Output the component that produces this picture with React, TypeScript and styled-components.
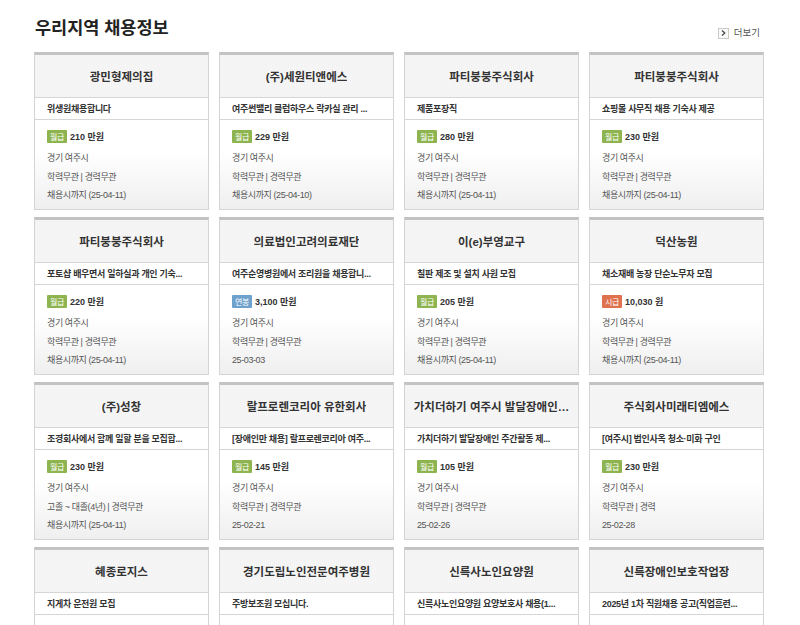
import * as React from 'react';
import styled, { createGlobalStyle } from 'styled-components';

const GlobalStyle = createGlobalStyle`
  html, body {
    margin: 0;
    padding: 0;
    background: #fff;
  }
  body {
    font-family: 'Liberation Sans', 'Noto Sans CJK KR', sans-serif;
    color: #333;
  }
`;

type PayKind = 'month' | 'year' | 'hour';

interface Job {
  company: string;
  title: string;
  kind: PayKind;
  pay: string;
  region: string;
  req: string;
  due: string;
}

const payLabel: Record<PayKind, string> = {
  month: '월급',
  year: '연봉',
  hour: '시급',
};

const payColor: Record<PayKind, string> = {
  month: '#8db44e',
  year: '#6ea2cd',
  hour: '#e0714f',
};

const jobs: Job[] = [
  { company: '광민형제의집', title: '위생원채용합니다', kind: 'month', pay: '210 만원', region: '경기 여주시', req: '학력무관 | 경력무관', due: '채용시까지 (25-04-11)' },
  { company: '(주)세원티앤에스', title: '여주썬밸리 클럽하우스 락카실 관리 ...', kind: 'month', pay: '229 만원', region: '경기 여주시', req: '학력무관 | 경력무관', due: '채용시까지 (25-04-10)' },
  { company: '파티붕붕주식회사', title: '제품포장직', kind: 'month', pay: '280 만원', region: '경기 여주시', req: '학력무관 | 경력무관', due: '채용시까지 (25-04-11)' },
  { company: '파티붕붕주식회사', title: '쇼핑몰 사무직 채용 기숙사 제공', kind: 'month', pay: '230 만원', region: '경기 여주시', req: '학력무관 | 경력무관', due: '채용시까지 (25-04-11)' },
  { company: '파티붕붕주식회사', title: '포토샵 배우면서 일하실과 개인 기숙...', kind: 'month', pay: '220 만원', region: '경기 여주시', req: '학력무관 | 경력무관', due: '채용시까지 (25-04-11)' },
  { company: '의료법인고려의료재단', title: '여주순영병원에서 조리원을 채용합니...', kind: 'year', pay: '3,100 만원', region: '경기 여주시', req: '학력무관 | 경력무관', due: '25-03-03' },
  { company: '이(e)부영교구', title: '칠판 제조 및 설치 사원 모집', kind: 'month', pay: '205 만원', region: '경기 여주시', req: '학력무관 | 경력무관', due: '채용시까지 (25-04-11)' },
  { company: '덕산농원', title: '채소재배 농장 단순노무자 모집', kind: 'hour', pay: '10,030 원', region: '경기 여주시', req: '학력무관 | 경력무관', due: '채용시까지 (25-04-11)' },
  { company: '(주)성창', title: '조경회사에서 함께 일할 분을 모집합...', kind: 'month', pay: '230 만원', region: '경기 여주시', req: '고졸 ~ 대졸(4년) | 경력무관', due: '채용시까지 (25-04-11)' },
  { company: '랄프로렌코리아 유한회사', title: '[장애인만 채용] 랄프로렌코리아 여주...', kind: 'month', pay: '145 만원', region: '경기 여주시', req: '학력무관 | 경력무관', due: '25-02-21' },
  { company: '가치더하기 여주시 발달장애인…', title: '가치더하기 발달장애인 주간활동 제...', kind: 'month', pay: '105 만원', region: '경기 여주시', req: '학력무관 | 경력무관', due: '25-02-26' },
  { company: '주식회사미래티엠에스', title: '[여주시] 법인사옥 청소·미화 구인', kind: 'month', pay: '230 만원', region: '경기 여주시', req: '학력무관 | 경력', due: '25-02-28' },
  { company: '혜종로지스', title: '지게차 운전원 모집', kind: 'month', pay: '230 만원', region: '경기 여주시', req: '학력무관 | 경력무관', due: '채용시까지 (25-04-11)' },
  { company: '경기도립노인전문여주병원', title: '주방보조원 모십니다.', kind: 'month', pay: '210 만원', region: '경기 여주시', req: '학력무관 | 경력무관', due: '채용시까지 (25-04-11)' },
  { company: '신륵사노인요양원', title: '신륵사노인요양원 요양보호사 채용(1...', kind: 'month', pay: '220 만원', region: '경기 여주시', req: '학력무관 | 경력무관', due: '채용시까지 (25-04-11)' },
  { company: '신륵장애인보호작업장', title: '2025년 1차 직원채용 공고(직업훈련...', kind: 'month', pay: '210 만원', region: '경기 여주시', req: '학력무관 | 경력무관', due: '채용시까지 (25-04-11)' },
];

const Page = styled.div`
  padding: 0 36px 0 34px;
`;

const TopBar = styled.div`
  display: flex;
  justify-content: space-between;
  align-items: flex-start;
  height: 52px;
  padding-top: 18px;
  box-sizing: border-box;
`;

const Heading = styled.h2`
  margin: 0 0 0 1px;
  font-size: 17.5px;
  line-height: 21px;
  font-weight: bold;
  color: #222;
`;

const More = styled.a`
  display: flex;
  align-items: center;
  gap: 5px;
  margin-top: 9px;
  margin-right: 4px;
  font-size: 9.5px;
  line-height: 12px;
  color: #555;
  text-decoration: none;
  cursor: pointer;
`;

const MoreIcon = styled.span`
  display: flex;
  align-items: center;
  justify-content: center;
  width: 9px;
  height: 9px;
  border: 1px solid #c9c9c9;
  background: #fafafa;
`;

const Grid = styled.div`
  display: grid;
  grid-template-columns: repeat(4, 175px);
  column-gap: 10px;
  row-gap: 7px;
`;

const Card = styled.div`
  box-sizing: border-box;
  height: 158px;
  border: 1px solid #d4d4d4;
  border-top: 3px solid #c3c3c3;
  display: flex;
  flex-direction: column;
  overflow: hidden;
`;

const CardHead = styled.div`
  height: 42px;
  flex-shrink: 0;
  display: flex;
  align-items: center;
  justify-content: center;
  padding: 0 4px;
  border-bottom: 1px solid #d6d6d6;
  background: repeating-linear-gradient(
    90deg,
    #f3f3f3 0,
    #f3f3f3 1px,
    #f6f6f6 1px,
    #f6f6f6 2px
  );
`;

const Company = styled.div`
  font-size: 11.5px;
  font-weight: bold;
  color: #333;
  white-space: nowrap;
  overflow: hidden;
`;

const Subject = styled.div`
  height: 21px;
  flex-shrink: 0;
  padding: 0 12px;
  display: flex;
  align-items: center;
  border-bottom: 1px solid #d6d6d6;
  font-size: 9px;
  font-weight: bold;
  letter-spacing: -0.3px;
  color: #333;
  white-space: nowrap;
  overflow: hidden;
  background: #fff;
`;

const Body = styled.div`
  flex: 1;
  padding: 8px 12px 0;
  background: linear-gradient(#fff 35%, #efefef);
`;

const PayRow = styled.div`
  display: flex;
  align-items: center;
  gap: 3px;
  height: 16px;
  margin-bottom: 5px;
  font-size: 9px;
  font-weight: bold;
  color: #333;
`;

const Badge = styled.span<{ $color: string }>`
  display: inline-flex;
  align-items: center;
  justify-content: center;
  width: 20px;
  height: 13px;
  border-radius: 1px;
  background: ${(p) => p.$color};
  color: #fff;
  font-size: 8px;
  font-weight: normal;
  letter-spacing: -0.3px;
`;

const Info = styled.div`
  font-size: 9px;
  line-height: 18.5px;
  color: #555;
  letter-spacing: -0.4px;
  white-space: nowrap;
`;

const JobCard = ({ job }: { job: Job }) => (
  <Card>
    <CardHead>
      <Company>{job.company}</Company>
    </CardHead>
    <Subject>{job.title}</Subject>
    <Body>
      <PayRow>
        <Badge $color={payColor[job.kind]}>{payLabel[job.kind]}</Badge>
        <span>{job.pay}</span>
      </PayRow>
      <Info>{job.region}</Info>
      <Info>{job.req}</Info>
      <Info>{job.due}</Info>
    </Body>
  </Card>
);

export default function App() {
  return (
    <Page>
      <GlobalStyle />
      <TopBar>
        <Heading>우리지역 채용정보</Heading>
        <More>
          <MoreIcon>
            <svg width="5" height="6" viewBox="0 0 5 6">
              <path d="M1 0.5 L3.8 3 L1 5.5" fill="none" stroke="#444" strokeWidth="1.2" />
            </svg>
          </MoreIcon>
          더보기
        </More>
      </TopBar>
      <Grid>
        {jobs.map((job, i) => (
          <JobCard key={i} job={job} />
        ))}
      </Grid>
    </Page>
  );
}
